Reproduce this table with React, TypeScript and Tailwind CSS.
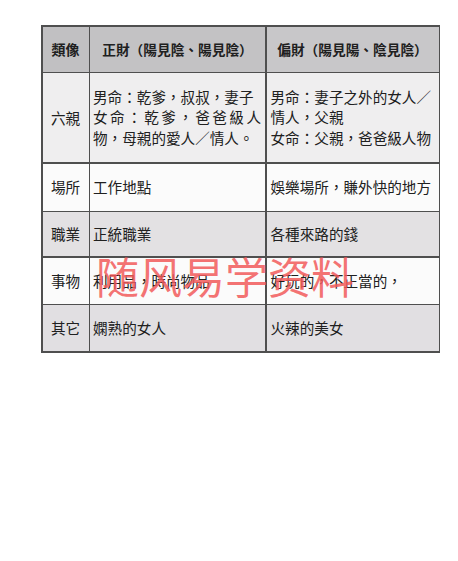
import React from "react";

const FONT = { fontFamily: '"Noto Sans CJK TC", "Noto Sans CJK SC", sans-serif' };

type Row = {
  label: string;
  bg: string;
  left: React.ReactNode;
  right: React.ReactNode;
};

const ROWS: Row[] = [
  {
    label: "六親",
    bg: "bg-[#efeeef]",
    left: (
      <div className="w-[168px] leading-[20.5px]">
        <div>男命：乾爹，叔叔，妻子</div>
        <div className="[text-align-last:justify]">女命：乾爹，爸爸級人</div>
        <div>物，母親的愛人／情人。</div>
      </div>
    ),
    right: (
      <div className="leading-[20.5px]">
        <div>男命：妻子之外的女人／</div>
        <div>情人，父親</div>
        <div>女命：父親，爸爸級人物</div>
      </div>
    ),
  },
  { label: "場所", bg: "bg-[#fbfbfb]", left: "工作地點", right: "娛樂場所，賺外快的地方" },
  { label: "職業", bg: "bg-[#e3e1e3]", left: "正統職業", right: "各種來路的錢" },
  { label: "事物", bg: "bg-[#fbfbfb]", left: "利用品，時尚物品", right: "好玩的，不正當的，" },
  { label: "其它", bg: "bg-[#e1dfe2]", left: "嫻熟的女人", right: "火辣的美女" },
];

export default function App() {
  return (
    <div className="relative w-[458px] h-[561px] bg-white text-[#202020]" style={FONT}>
      <div className="pt-[25px] pl-[41px]">
        <div className="grid w-[399px] grid-cols-[46px_175px_172px] grid-rows-[45px_89px_47px_44px_46px_46px] gap-[1.5px] p-[1.5px] bg-[#4f4f4f] text-[14.6px]">
          {/* header */}
          <div className="flex items-center justify-center bg-[#c1c0c2] font-bold text-[14px]">類像</div>
          <div className="flex items-center justify-center bg-[#c3c2c4] font-bold text-[13.7px]">正財（陽見陰、陽見陰）</div>
          <div className="flex items-center justify-center bg-[#c8c7c9] font-bold text-[13.7px]">偏財（陽見陽、陰見陰）</div>

          {ROWS.map((r) => (
            <React.Fragment key={r.label}>
              <div className={`flex items-center justify-center ${r.bg}`}>{r.label}</div>
              <div className={`flex items-center pl-[3px] ${r.bg}`}>{r.left}</div>
              <div className={`flex items-center pl-[4px] ${r.bg}`}>{r.right}</div>
            </React.Fragment>
          ))}
        </div>
      </div>

      {/* watermark */}
      <div
        className="absolute left-[96px] top-[254px] text-[43px] leading-none text-[#f25a5a]/85 tracking-[0px] whitespace-nowrap"
        style={{ fontFamily: '"Noto Sans CJK SC", sans-serif' }}
      >
        随风易学资料
      </div>
    </div>
  );
}
